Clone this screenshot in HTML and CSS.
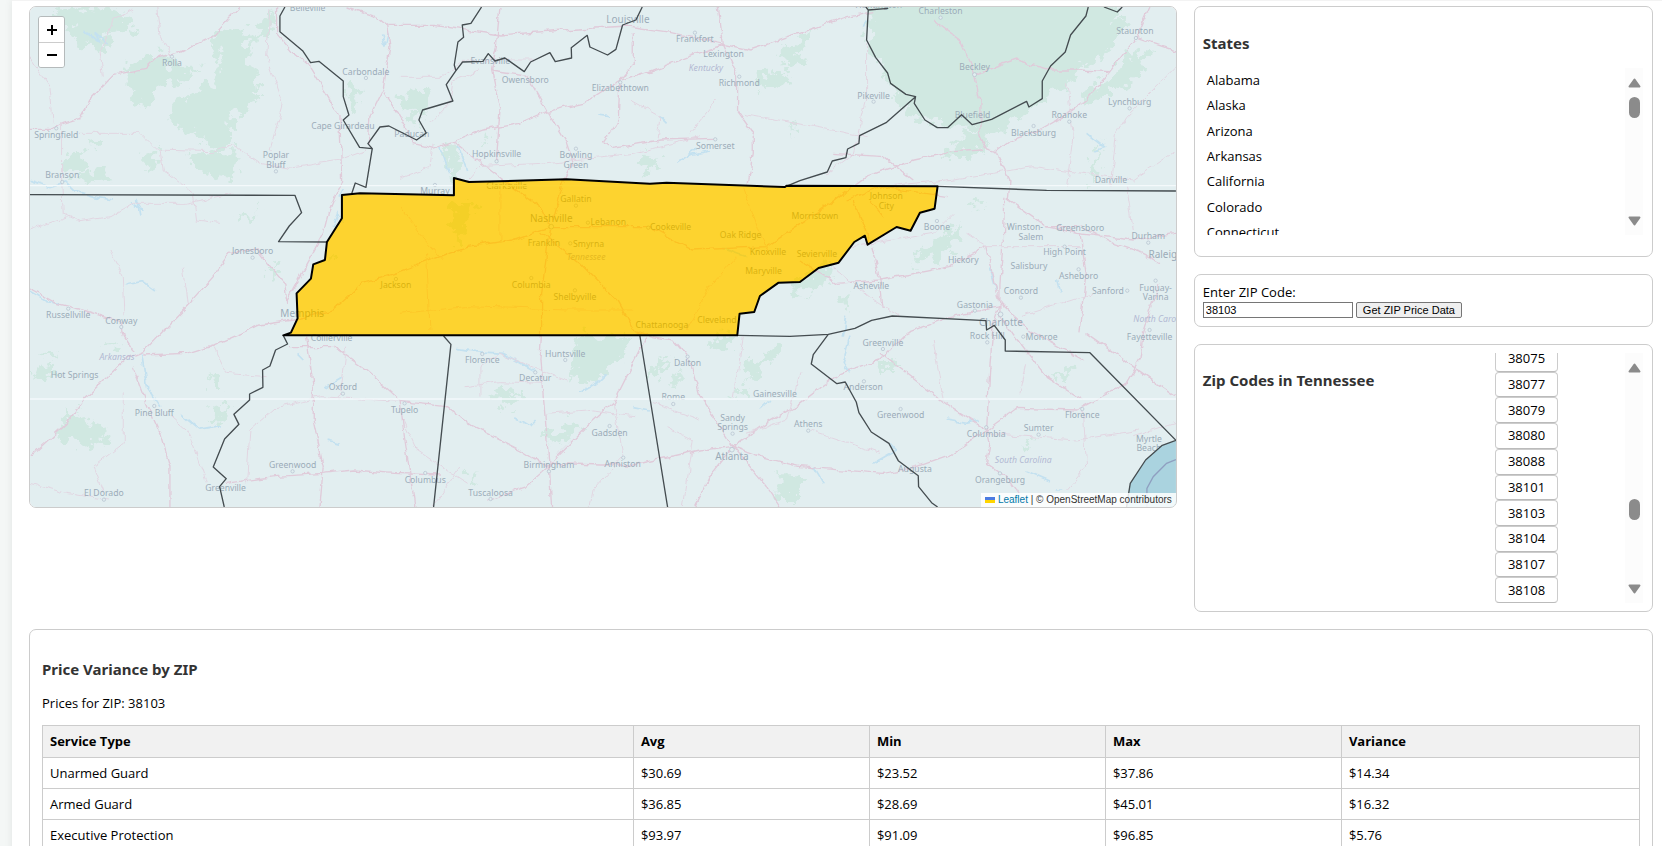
FILE: index.html
```html
<!DOCTYPE html>
<html lang="en">
<head>
<meta charset="utf-8">
<title>ZIP Price Data</title>
<link rel="stylesheet" href="styles.css">
</head>
<body>
<main class="page">
  <div class="layout">
    <section class="map" aria-label="Map of Tennessee">
      <svg class="map-canvas" viewBox="90 21 3438 1500" preserveAspectRatio="xMidYMid slice">
        <defs>
          <filter id="rough" x="-5%" y="-5%" width="110%" height="110%">
            <feTurbulence type="fractalNoise" baseFrequency="0.035" numOctaves="4" seed="4" result="n"/>
            <feDisplacementMap in="SourceGraphic" in2="n" scale="80" xChannelSelector="R" yChannelSelector="G"/>
          </filter>
          <filter id="wobble" x="-5%" y="-5%" width="110%" height="110%">
            <feTurbulence type="fractalNoise" baseFrequency="0.03" numOctaves="3" seed="9" result="n"/>
            <feDisplacementMap in="SourceGraphic" in2="n" scale="20" xChannelSelector="R" yChannelSelector="G"/>
          </filter>
        </defs>
        <rect class="land" x="90" y="21" width="3438" height="1500"/>
        <g class="forest" filter="url(#rough)">
          <path d="M160 25H330L400 60 390 105 330 90 320 150 250 140 215 90 170 70Z"/>
          <path d="M640 115L700 85 760 110 790 60 830 30 815 100 740 130 740 180 770 215 775 300 720 335 690 350 700 440 640 455 590 410 530 370 510 340 540 300 590 270 640 250 660 190Z"/>
          <path d="M380 190L470 170 500 140 510 200 600 200 570 240 480 260 460 300 410 320 380 270Z"/>
          <path d="M565 460L710 460 700 540 650 530 580 500Z"/>
          <path d="M190 465L250 450 260 500 200 520 180 490ZM250 515L330 500 325 535 250 545ZM430 470L475 440 470 500 430 520ZM275 425L305 420 300 445 280 445Z"/>
          <path d="M1035 240L1065 250 1080 320 1060 340 1040 290ZM1195 290L1240 270 1290 270 1280 340 1220 330ZM1225 350L1250 340 1255 375 1240 380Z"/>
          <path d="M1445 395L1465 400 1460 430 1445 425ZM1910 490L1950 455 1975 490 1940 520ZM2340 160L2380 130 2420 100 2440 90 2390 200 2350 200ZM2280 220L2360 215 2370 250 2290 280ZM2365 370L2400 375 2395 400 2370 400Z"/>
          <path d="M1330 435L1370 430 1385 520 1350 530ZM1350 620L1400 600 1430 640 1400 670 1385 740 1360 700Z"/>
          <path d="M2610 30L2600 -40H3350L3350 40 3310 110 3200 190 3150 290 3080 340 2980 400 2900 450 2840 470 2850 430 2930 390 2860 385 2780 370 2720 340 2670 260 2605 130Z"/>
          <path d="M3380 170L3450 150 3420 230 3330 280 3250 320 3240 280 3320 240ZM3270 100L3380 40 3350 130 3240 220 3200 260 3130 290 3160 210ZM2970 410L2850 460 2820 475 2920 470 2970 430Z"/>
          <path d="M3280 470L3300 430 3290 540 3270 550ZM2910 610L2960 600 2950 620 2920 625ZM2840 700L2880 670 2880 720 2800 780 2730 790 2780 740ZM2360 880L2440 800 2500 800 2490 850 2420 880ZM2525 890L2555 880 2555 915 2530 920Z"/>
          <path d="M1740 1010L1900 1010 1870 1060 1800 1130 1760 1150 1700 1140 1720 1080ZM1475 1165L1560 1170 1560 1220 1500 1220ZM1640 1300L1720 1270 1750 1280 1700 1320 1650 1330ZM2235 1080L2270 1080 2340 1030 2330 1070 2240 1150ZM2140 1010H2190V1045H2140ZM1950 1130L2000 1060 2010 1080 1960 1140ZM2010 1160L2050 1100 2040 1160ZM2210 1170H2250V1190H2210ZM2330 1420H2400V1500H2330Z"/>
          <path d="M95 1110L140 1095 170 1120 130 1140ZM125 1055L170 1055 170 1070 125 1072ZM190 1210L260 1260 320 1280 310 1340 250 1330 170 1320 200 1270ZM640 1220L680 1215 670 1280 645 1270ZM620 1120L670 1150 660 1170 640 1160ZM315 1030H350V1045H320ZM810 790L830 790 820 850 810 840ZM720 650L780 625 760 650 720 660ZM985 760L1000 750 995 790Z"/>
          <path d="M3150 1130L3210 1110 3220 1135 3160 1145ZM2640 1080H2690V1110H2650ZM3070 1330L3095 1320 3090 1350ZM1410 1420L1430 1410 1425 1460 1410 1460Z"/>
        </g>
        <g class="water" filter="url(#wobble)">
          <path d="M250 90L300 130 285 100 320 130M1145 100L1155 140 1165 100M92 540L150 560 200 545 230 575 280 590 340 600M390 610L430 635 410 600 420 650M380 855L430 845 465 870M90 875L140 905 180 910M1320 440L1345 520M1375 440L1400 510M2030 490L2060 470 2090 450 2060 470 2130 455M1980 350L2000 370M1795 345L1830 350M2590 80L2600 60M3260 400L3310 440 3280 450M2550 1010L2530 1090 2550 1120M2540 950L2530 1010M1370 1045L1430 1055 1510 1060 1600 1110M1740 1180L1790 1150 1820 1120M2280 1230L2310 1200M1900 1220L1950 1230M2840 1260L2900 1270 2940 1260M3080 1410L3150 1440M3170 1470L3190 1470M2620 1390L2690 1350 2670 1330M2440 1400L2470 1450M540 1240L600 1290 660 1280M425 1060L440 1160 480 1220M975 1165L1025 1135M980 1320L1020 1330M1540 1250L1590 1280 1610 1260M2170 745L2240 770M2970 800L2990 870M3170 840L3180 880M1000 680L1015 640 1030 670M1030 570L1020 590M890 1060L910 1080"/>
        </g>
        <g class="roads" filter="url(#wobble)">
          <path d="M90 388H160L190 370 240 355 270 300 340 226 440 205 475 172 540 155 640 108 720 22"/>
          <path d="M830 22L830 100 880 160 930 200 985 290 1020 350 1025 540 985 640 970 700 900 830 860 905 855 850 800 790 770 750 690 760 640 830 570 910 430 1055 380 1075 250 1200 210 1260 90 1370"/>
          <path d="M1040 21L1130 50 1160 75 1170 140 1150 270 1110 350 1105 430M1165 76H1300L1500 105 1690 90 1880 78 2000 95 2160 130 2250 150 2400 100 2540 50 2620 35"/>
          <path d="M1150 270L1200 350 1240 430 1300 445 1360 425 1450 390 1560 370 1640 335 1750 310 1860 240 1960 210 2120 150 2180 130"/>
          <path d="M1360 425L1420 470 1510 540 1620 620 1650 680 1640 760 1625 880 1625 1000 1620 1080 1640 1300 1650 1430 1655 1521"/>
          <path d="M1500 21L1490 130 1475 210 1500 330 1490 480M2155 21L2170 130 2210 220 2210 330 2260 400 2260 460 2245 550M1900 100L1900 190 1860 240 1855 360 1810 425 1840 445 1980 420 2140 415"/>
          <path d="M1475 210L1580 225 1640 330 1700 430 1720 490 1690 550 1660 660"/>
          <path d="M90 867L170 910 250 930 360 965 370 1010 400 1055M430 1065L560 1060 640 1035 780 975 880 960 1000 930 1090 850 1200 815 1400 740 1540 720 1650 680 1800 680 1950 680 2080 750 2300 740 2450 640 2600 530 2740 480 2860 455 2950 450"/>
          <path d="M1625 700L1740 790 1850 900 1900 990 1960 1010 2020 1020 2070 1080 2100 1190 2180 1310 2200 1340 2300 1460 2340 1521M2200 1340L2130 1430 2085 1521M2200 1340L2100 1350 1900 1395 1800 1395 1660 1390 1580 1460 1460 1500M2200 1340L2300 1270 2400 1210 2520 1120 2640 1080 2720 1000 2850 950 3000 920M2200 1340L2280 1370 2360 1390 2400 1400"/>
          <path d="M1640 1400L1760 1280 1840 1210 1940 1010M1200 1204L1340 1220 1420 1280 1560 1350 1640 1400M920 1010L940 1160 940 1260 970 1400 960 1521M870 1040L1000 1040 1100 1110 1200 1200 1215 1320 1245 1521M400 1100L440 1210 480 1300 510 1400 510 1521"/>
          <path d="M2640 1060L2720 1120 2850 1220 2960 1290 2970 1330 2960 1390 3020 1430 3080 1521M2960 1290L3050 1225 3230 1230 3380 1150 3420 1080 3430 1000 3480 850M2960 1290L2860 1360 2750 1400 2650 1420 2400 1400M2400 780L2510 850 2640 840 2850 800 2960 740"/>
          <path d="M2800 60L2880 120 2920 210 2940 300 2940 410 2960 450 2990 460 3030 540 3025 600 3140 680 3230 700 3400 720 3528 700M3140 680H3240L3340 730 3430 760 3480 785M2920 225L3050 180 3150 210 3240 210 3330 215 3410 110 3528 150M3330 215L3260 300 3190 350 3120 390 3030 420 2980 460M3450 21L3410 110"/>
          <path d="M3015 590L3010 720 3000 850 3000 950 3140 1130 3250 1200M2960 740L3000 910 2980 970 2970 1100 2960 1290M3000 910L3100 1000 3250 1080M3260 1000L3400 1100 3528 1190M3240 700L3260 830 3240 1000"/>
          <path d="M2500 460L2650 470 2740 540M2540 600L2640 560 2840 590M2560 600L2610 720 2640 840 2650 930M2610 600L2650 650M680 1450L820 1430 970 1420 1060 1410 1180 1420 1320 1425"/>
        </g>
        <g class="minor" filter="url(#wobble)">
          <path d="M90 170L150 260 160 370M185 370V540L190 640 240 665 330 650 400 610 560 610 700 580M470 21L480 100 520 170M300 150L310 230M300 150L340 60 400 30M240 400L420 400 470 450 640 455 700 435 780 490 870 505 1020 480 1100 450M810 30L800 170 850 310 810 450M480 450L490 510 580 580 590 660 660 670"/>
          <path d="M1200 535L1290 500 1300 430M1200 232H1320L1400 180 1600 180M1290 370L1350 310 1360 240 1440 210M1400 545L1440 500 1620 490 1900 460 2100 410M1890 300L1980 350 1970 430M2150 300L2070 400M2230 340L2600 410M2480 520L2560 460 2600 300 2600 130M2640 560L2840 540 2980 520 3100 500 3400 540 3528 450M3200 560L3220 400 3200 250M3330 560L3350 400 3380 350 3528 200"/>
          <path d="M90 690L200 650M330 750L370 830 375 940M550 800L565 910M640 1040L680 1120 800 1130M90 1450L200 1480 330 1500M370 1180L370 1330 280 1400 310 1480M500 1240L570 1300 620 1450M1040 1040L1020 1200M740 1450L750 1290 830 1220 960 1190 1200 1204M1210 1260L1250 1350 1400 1450M1400 1160L1500 1145 1630 1150M1440 1190L1440 1100 1500 1060M1500 1060L1620 1110 1700 1140M1640 1240L1760 1230 1900 1250M1840 1210L1870 1370 1780 1470 1770 1521M1960 1210L2100 1260M2000 1280L2080 1320 2050 1521M2230 1010L2200 1190M2400 1120L2360 1260 2240 1300M2430 1290L2640 1360M2800 1020L2830 1200M2960 1300L3230 1320 3420 1290M3060 1180L3080 1090M3250 1230L3260 1400 3200 1470M3400 1310L3528 1270M3060 950L3280 880M2900 700L2960 740 3240 740M3380 560L3400 690M2560 740L2800 700 2860 640M1300 1521L1380 1400M1500 720L1500 560M1200 620L1260 700 1330 780M1280 760L1290 990M1200 940L1400 920 1700 930 1900 930M2060 990L2130 860 2210 770M2230 560L2280 700 2310 760M2500 800L2620 900 2700 950"/>
        </g>
        <g class="places">
          <text x="923" y="34">Belleville</text><text x="516" y="197">Rolla</text><text x="1098" y="224">Carbondale</text><text x="169" y="413">Springfield</text><text x="1029" y="386">Cape Girardeau</text><text x="828" y="473">Poplar</text><text x="828" y="503">Bluff</text><text x="187" y="534">Branson</text><text x="1236" y="410">Paducah</text><text x="758" y="762">Jonesboro</text>
          <text x="1471" y="192">Evansville</text><text x="1576" y="250">Owensboro</text><text x="1861" y="274">Elizabethtown</text><text x="2085" y="125">Frankfort</text><text x="2171" y="171">Lexington</text><text x="2218" y="258">Richmond</text><text x="2146" y="446">Somerset</text><text x="1490" y="472">Hopkinsville</text><text x="1728" y="475">Bowling</text><text x="1728" y="504">Green</text><text x="1305" y="582">Murray</text><text x="1520" y="567">Clarksville</text><text x="1728" y="605">Gallatin</text><text x="1825" y="676">Lebanon</text><text x="2012" y="690">Cookeville</text><text x="1632" y="737">Franklin</text><text x="1766" y="740">Smyrna</text><text x="2222" y="713">Oak Ridge</text><text x="2304" y="765">Knoxville</text><text x="2445" y="656">Morristown</text><text x="2451" y="772">Sevierville</text><text x="2291" y="823">Maryville</text><text x="2659" y="596">Johnson</text><text x="2659" y="626">City</text>
          <text x="1188" y="865">Jackson</text><text x="1594" y="863">Columbia</text><text x="1725" y="900">Shelbyville</text><text x="1986" y="983">Chattanooga</text><text x="2151" y="970">Cleveland</text>
          <text x="2636" y="24">Huntington</text><text x="2822" y="43">Charleston</text><text x="2924" y="210">Beckley</text><text x="2621" y="296">Pikeville</text><text x="2918" y="355">Bluefield</text><text x="3101" y="407">Blacksburg</text><text x="3208" y="355">Roanoke</text><text x="3389" y="315">Lynchburg</text><text x="3405" y="102">Staunton</text><text x="3333" y="550">Danville</text><text x="2811" y="691">Boone</text><text x="3075" y="691">Winston-</text><text x="3093" y="720">Salem</text><text x="3241" y="694">Greensboro</text><text x="3445" y="717">Durham</text><text x="3194" y="766">High Point</text><text x="2890" y="790">Hickory</text><text x="3087" y="808">Salisbury</text><text x="3236" y="836">Asheboro</text><text x="2614" y="867">Asheville</text><text x="3063" y="881">Concord</text><text x="3324" y="881">Sanford</text><text x="3467" y="872">Fuquay-</text><text x="3467" y="901">Varina</text><text x="2925" y="923">Gastonia</text><text x="2962" y="1017">Rock Hill</text><text x="3125" y="1019">Monroe</text><text x="3449" y="1020">Fayetteville</text><text x="2649" y="1038">Greenville</text><text x="2590" y="1171">Anderson</text><text x="2702" y="1255">Greenwood</text><text x="2959" y="1310">Columbia</text><text x="3116" y="1293">Sumter</text><text x="3247" y="1254">Florence</text><text x="3447" y="1325">Myrtle</text><text x="3447" y="1354">Beach</text><text x="2745" y="1416">Augusta</text><text x="3000" y="1450">Orangeburg</text>
          <text x="205" y="955">Russellville</text><text x="364" y="971">Conway</text><text x="224" y="1134">Hot Springs</text><text x="463" y="1247">Pine Bluff</text><text x="995" y="1023">Collierville</text><text x="1029" y="1171">Oxford</text><text x="1214" y="1239">Tupelo</text><text x="878" y="1404">Greenwood</text><text x="677" y="1472">Greenville</text><text x="312" y="1487">El Dorado</text><text x="1276" y="1449">Columbus</text>
          <text x="1447" y="1089">Florence</text><text x="1696" y="1071">Huntsville</text><text x="1606" y="1142">Decatur</text><text x="2063" y="1098">Dalton</text><text x="2020" y="1201">Rome</text><text x="2325" y="1190">Gainesville</text><text x="2198" y="1262">Sandy</text><text x="2198" y="1291">Springs</text><text x="2425" y="1282">Athens</text><text x="1829" y="1307">Gadsden</text><text x="1647" y="1403">Birmingham</text><text x="1868" y="1401">Anniston</text><text x="1472" y="1488">Tuscaloosa</text>
          <g class="cities"><text x="1884" y="69">Louisville</text><text x="1654" y="666">Nashville</text><text x="907" y="951">Memphis</text><text x="3003" y="977">Charlotte</text><text x="3498" y="774">Raleigh</text><text x="2196" y="1381">Atlanta</text></g>
          <g class="regions"><text x="2118" y="214">Kentucky</text><text x="1759" y="780">Tennessee</text><text x="351" y="1079">Arkansas</text><text x="3070" y="1390">South Carolina</text><text x="3486" y="965">North Carolina</text></g>
        </g>
        <g class="dots">
          <circle cx="169" cy="385" r="5"/><circle cx="516" cy="170" r="5"/><circle cx="1098" cy="234" r="5"/><circle cx="828" cy="514" r="5"/><circle cx="187" cy="546" r="5"/><circle cx="758" cy="773" r="5"/><circle cx="2085" cy="98" r="5"/><circle cx="1861" cy="247" r="5"/><circle cx="2218" cy="230" r="5"/><circle cx="2146" cy="418" r="5"/><circle cx="1490" cy="484" r="5"/><circle cx="1728" cy="446" r="5"/><circle cx="1305" cy="555" r="5"/><circle cx="1728" cy="617" r="5"/><circle cx="1654" cy="680" r="7"/><circle cx="1764" cy="668" r="5"/><circle cx="1945" cy="683" r="5"/><circle cx="1711" cy="730" r="5"/><circle cx="1188" cy="837" r="5"/><circle cx="1594" cy="834" r="5"/><circle cx="1725" cy="871" r="5"/><circle cx="2822" cy="53" r="5"/><circle cx="2924" cy="224" r="6"/><circle cx="2621" cy="305" r="5"/><circle cx="3101" cy="378" r="5"/><circle cx="3208" cy="365" r="5"/><circle cx="3389" cy="325" r="5"/><circle cx="3408" cy="114" r="5"/><circle cx="2811" cy="663" r="5"/><circle cx="3445" cy="728" r="5"/><circle cx="3194" cy="740" r="5"/><circle cx="3236" cy="808" r="5"/><circle cx="3063" cy="893" r="5"/><circle cx="3382" cy="872" r="5"/><circle cx="3467" cy="842" r="5"/><circle cx="2925" cy="932" r="5"/><circle cx="3002" cy="943" r="7"/><circle cx="3070" cy="1010" r="5"/><circle cx="2962" cy="1027" r="5"/><circle cx="3449" cy="990" r="5"/><circle cx="2649" cy="1047" r="5"/><circle cx="2592" cy="1144" r="5"/><circle cx="2702" cy="1227" r="5"/><circle cx="2959" cy="1282" r="5"/><circle cx="3247" cy="1227" r="5"/><circle cx="3116" cy="1304" r="5"/><circle cx="3000" cy="1420" r="5"/><circle cx="205" cy="926" r="5"/><circle cx="364" cy="981" r="5"/><circle cx="463" cy="1218" r="5"/><circle cx="1029" cy="1181" r="5"/><circle cx="1214" cy="1210" r="5"/><circle cx="878" cy="1414" r="5"/><circle cx="312" cy="1499" r="5"/><circle cx="1276" cy="1419" r="5"/><circle cx="1447" cy="1062" r="5"/><circle cx="1696" cy="1080" r="5"/><circle cx="1606" cy="1117" r="5"/><circle cx="2063" cy="1070" r="5"/><circle cx="2020" cy="1212" r="5"/><circle cx="2198" cy="1301" r="5"/><circle cx="2425" cy="1292" r="5"/><circle cx="1829" cy="1278" r="5"/><circle cx="1647" cy="1414" r="5"/><circle cx="1870" cy="1373" r="5"/><circle cx="1472" cy="1497" r="5"/><circle cx="2196" cy="1349" r="7"/>
        </g>
        <path class="ocean" d="M3528 1321L3487 1336 3437 1380 3391 1450 3383 1500 3380 1521H3528Z"/>
        <path class="sea-line" d="M3528 1379L3500 1390 3460 1430 3441 1465V1521"/>
        <path class="veil" fill-rule="evenodd" d="M90 21H3528V1321L3487 1336 3437 1380 3391 1450 3383 1500 3380 1521H90ZM1026 585L1080 580 1362 586 1362 534 1407 546 1700 538 1950 551 2000 548 2355 561 2360 557 2813 559 2804 626 2760 638 2732 692 2690 681 2603 734 2595 707 2563 726 2516 788 2456 804 2400 846 2336 848 2280 888 2263 936 2219 941 2212 1006H850L873 998 893 955 890 880 933 836 940 793 975 780 981 726 1026 655Z"/>
        <path class="seams" d="M90 557H3528M90 1197H3528"/>
        <g class="borders">
          <path d="M855 21L840 48V95L908 152 932 188 957 184 1030 243V290L1047 345 1030 360 1079 442 1117 446 1104 431 1140 381 1167 378 1250 420 1279 399 1257 360 1268 330 1359 303 1339 254 1368 212 1388 186 1449 184 1465 161 1485 183 1515 174 1573 215 1592 186 1650 158 1666 185 1715 174 1714 143 1762 106 1770 141 1823 165 1848 148 1868 75 1908 60 1927 21"/>
          <path d="M1368 212L1363 195 1374 126 1391 112 1387 75 1413 70 1445 21M1117 446L1098 562 1066 549 1055 582M90 584L885 586 905 638 868 678 836 725 981 726"/>
          <path d="M850 1006L863 1032 827 1050 810 1098 788 1110 789 1162 749 1182V1200L702 1243 717 1273 674 1317 640 1401 679 1436 659 1460 673 1521M1331 1008L1353 1033 1301 1521M1920 1008L2003 1521"/>
          <path d="M2213 1006L2370 1009 2485 1003 2565 985 2615 961 2677 948 2958 962 2960 990 2983 976 3016 1020V1053L3270 1058 3528 1321 3487 1336 3437 1380 3391 1450 3383 1500 3380 1521"/>
          <path d="M2485 1003L2440 1064 2434 1092 2511 1151 2536 1146 2569 1206 2577 1238 2614 1296 2667 1330 2695 1382 2755 1427 2756 1460 2795 1508 2813 1521"/>
          <path d="M2357 560L2400 542 2482 516 2497 483 2538 473 2543 447 2577 430 2579 407 2660 367 2747 290 2718 283 2672 250 2663 219 2627 172 2600 120 2605 30 2665 25M2605 30L2598 21M2747 290L2743 310 2775 360 2812 383H2843L2885 344 2917 374 2975 358 3080 304 3087 321 3127 296V243L3152 198 3196 156 3212 105 3258 48 3265 21M3312 21L3352 36 3367 21M2813 559L3140 571 3528 573"/>
        </g>
        <path class="selected" d="M1026 585L1080 580 1362 586 1362 534 1407 546 1700 538 1950 551 2000 548 2355 561 2360 557 2813 559 2804 626 2760 638 2732 692 2690 681 2603 734 2595 707 2563 726 2516 788 2456 804 2400 846 2336 848 2280 888 2263 936 2219 941 2212 1006H850L873 998 893 955 890 880 933 836 940 793 975 780 981 726 1026 655Z"/>
      </svg>
      <div class="zoom">
        <button type="button" class="zoom-btn" aria-label="Zoom in"><svg viewBox="0 0 12 12"><path d="M6 1V11M1 6H11"/></svg></button>
        <button type="button" class="zoom-btn" aria-label="Zoom out"><svg viewBox="0 0 12 12"><path d="M1 6H11"/></svg></button>
      </div>
      <div class="credit"><a href="#"><svg class="flag" viewBox="0 0 10 6"><path fill="#4c7be1" d="M0 0h10v3H0z"/><path fill="#ffd500" d="M0 3h10v3H0z"/></svg> Leaflet</a> | © OpenStreetMap contributors</div>
    </section>

    <div class="side">
      <section class="card states">
        <h3 class="title">States</h3>
        <div class="scroller">
          <ul class="state-list">
            <li>Alabama</li><li>Alaska</li><li>Arizona</li><li>Arkansas</li><li>California</li><li>Colorado</li><li>Connecticut</li>
          </ul>
          <div class="track">
            <svg class="arrow" viewBox="0 0 13 10"><path d="M6.5 1.5L11.5 8.5H1.5Z"/></svg>
            <span class="thumb"></span>
            <svg class="arrow arrow-down" viewBox="0 0 13 10"><path d="M6.5 8.5L11.5 1.5H1.5Z"/></svg>
          </div>
        </div>
      </section>

      <form class="card zip-form">
        <label class="zip-label" for="zip">Enter ZIP Code:</label>
        <div class="zip-row">
          <input class="zip-input" id="zip" type="text" value="38103">
          <button class="zip-submit" type="button">Get ZIP Price Data</button>
        </div>
      </form>

      <section class="card zips">
        <h3 class="title zips-title">Zip Codes in Tennessee</h3>
        <div class="zip-window">
          <div class="zip-list">
            <button type="button">38075</button><button type="button">38077</button><button type="button">38079</button><button type="button">38080</button><button type="button">38088</button><button type="button">38101</button><button type="button">38103</button><button type="button">38104</button><button type="button">38107</button><button type="button">38108</button>
          </div>
        </div>
        <div class="track">
          <svg class="arrow" viewBox="0 0 13 10"><path d="M6.5 1.5L11.5 8.5H1.5Z"/></svg>
          <span class="thumb thumb-low"></span>
          <svg class="arrow arrow-down" viewBox="0 0 13 10"><path d="M6.5 8.5L11.5 1.5H1.5Z"/></svg>
        </div>
      </section>
    </div>

    <section class="card prices">
      <h3 class="title">Price Variance by ZIP</h3>
      <p class="note">Prices for ZIP: 38103</p>
      <table class="price-table">
        <colgroup><col class="col-service"><col class="col-num"><col class="col-num"><col class="col-num"><col></colgroup>
        <thead><tr><th>Service Type</th><th>Avg</th><th>Min</th><th>Max</th><th>Variance</th></tr></thead>
        <tbody>
          <tr><td>Unarmed Guard</td><td>$30.69</td><td>$23.52</td><td>$37.86</td><td>$14.34</td></tr>
          <tr><td>Armed Guard</td><td>$36.85</td><td>$28.69</td><td>$45.01</td><td>$16.32</td></tr>
          <tr><td>Executive Protection</td><td>$93.97</td><td>$91.09</td><td>$96.85</td><td>$5.76</td></tr>
        </tbody>
      </table>
    </section>
  </div>
</main>
</body>
</html>
```

FILE: styles.css
```css
* { box-sizing: border-box; }

html { scrollbar-width: none; }

body {
  margin: 0;
  background: #f4f7f6;
  color: #000;
  font: 13px/17px "Open Sans", "Noto Sans", sans-serif;
}

.page {
  margin-left: 12px;
  padding: 5px 9px 17px 17px;
  border-top: 1px solid #f3f3f3;
  background: #fff;
  box-shadow: 0 0 8px rgba(0, 0, 0, 0.08);
}

.layout {
  display: grid;
  grid-template-columns: 5fr 2fr;
  gap: 17px;
  align-items: start;
}

.card {
  border: 1px solid #ccc;
  border-radius: 7px;
  padding: 8px;
}

.title {
  margin: 0;
  color: #333;
  font-family: "Noto Sans", "Open Sans", sans-serif;
  font-size: 15px;
  line-height: 20px;
  font-weight: 700;
}

/* Map */
.map {
  position: relative;
  height: 502px;
  overflow: hidden;
  border: 1px solid #ccc;
  border-radius: 7px;
}

.map-canvas { display: block; width: 100%; height: 100%; }
.land { fill: #f2efe9; }
.forest { fill: #c6e0c4; }
.water { fill: none; stroke: #a5cfe8; stroke-width: 5; }
.roads { fill: none; stroke: #ee98b0; stroke-width: 4; }
.minor { fill: none; stroke: #f2b4c4; stroke-width: 3; }
.places { fill: #40485a; font-family: "Noto Sans", sans-serif; font-size: 26px; text-anchor: middle; }
.cities { font-size: 30px; }
.regions { fill: #7a6a9c; font-style: italic; }
.dots { fill: #f2efe9; stroke: #7a7a90; stroke-width: 2; }
.ocean { fill: #aad3df; }
.sea-line { fill: none; stroke: #8f9fc0; stroke-width: 4; }
.veil { fill: #d7edf5; fill-opacity: 0.6; }
.seams { stroke: #f4f9fb; stroke-width: 4; }
.borders { fill: none; stroke: #444c50; stroke-width: 4; stroke-linejoin: round; }
.selected { fill: #fc0; fill-opacity: 0.8; stroke: #000; stroke-width: 6; stroke-linejoin: round; }

.zoom {
  position: absolute;
  top: 9px;
  left: 8px;
  width: 27px;
  border: 1px solid #b5babb;
  border-radius: 3px;
  overflow: hidden;
}

.zoom-btn {
  display: flex;
  align-items: center;
  justify-content: center;
  width: 25px;
  height: 25px;
  padding: 0;
  border: 0;
  background: #fff;
}

.zoom-btn + .zoom-btn { border-top: 1px solid #ccc; }
.zoom-btn svg { width: 12px; height: 12px; fill: none; stroke: #000; stroke-width: 2; }

.credit {
  position: absolute;
  right: 0;
  bottom: 0;
  padding: 0 4px;
  background: rgba(255, 255, 255, 0.85);
  color: #333;
  font: 10px/14px "Liberation Sans", sans-serif;
}

.credit a { color: #0078a8; text-decoration: none; }
.flag { width: 10px; height: 6px; }

/* Side column */
.side { display: grid; gap: 17px; }

.states { height: 251px; }
.states .title { padding: 18px 0 15px; }

.scroller { display: flex; height: 167px; overflow: hidden; }

.state-list {
  flex: 1;
  display: grid;
  grid-auto-rows: 1fr;
  align-items: center;
  height: 177px;
  margin: 0;
  padding: 0 4px;
  list-style: none;
}

.track {
  display: flex;
  flex-direction: column;
  align-items: center;
  width: 18px;
  margin-right: 1px;
  padding: 10px 0 9px;
  background: #fcfcfc;
}

.arrow { width: 13px; height: 10px; fill: #8b8b8b; stroke: #8b8b8b; stroke-width: 2; stroke-linejoin: round; }
.arrow-down { margin-top: auto; }
.thumb { width: 11px; height: 21px; margin-top: 9px; border-radius: 6px; background: #8b8b8b; }
.thumb-low { margin-top: 126px; }

.zip-form { padding: 8px; }
.zip-label { display: block; line-height: 19px; }
.zip-row { display: flex; gap: 3px; }

.zip-input {
  width: 150px;
  height: 16px;
  padding: 0 2px;
  border: 1px solid #767676;
  font: 11px "Liberation Sans", sans-serif;
}

.zip-submit {
  height: 16px;
  padding: 0 6px;
  border: 1px solid #767676;
  border-radius: 2px;
  background: #efefef;
  color: #000;
  font: 11px/14px "Liberation Sans", sans-serif;
}

.zips { display: flex; height: 268px; }
.zips-title { flex: 1; padding-top: 17px; }

.zip-window {
  display: flex;
  flex-direction: column;
  justify-content: flex-end;
  margin-right: 67px;
  overflow: hidden;
}

.zip-list { display: grid; grid-auto-rows: 1fr; flex: none; height: 257px; }

.zip-list button {
  width: 63px;
  padding: 0;
  border: 1px solid #ccc;
  border-bottom-color: #bbb;
  border-radius: 4px;
  background: #fff;
  color: #000;
  font: inherit;
}

/* Prices */
.prices { grid-column: 1 / -1; padding: 29px 12px 12px; }
.note { margin: 15px 0 13px; line-height: 18px; }

.price-table {
  width: 100%;
  border-collapse: collapse;
  table-layout: fixed;
}

.price-table th,
.price-table td {
  height: 31px;
  padding: 0 7px;
  border: 1px solid #ccc;
  text-align: left;
}

.price-table th { height: 32px; background: #f1f1f1; }
.col-service { width: 37%; }
.col-num { width: 236px; }
```
